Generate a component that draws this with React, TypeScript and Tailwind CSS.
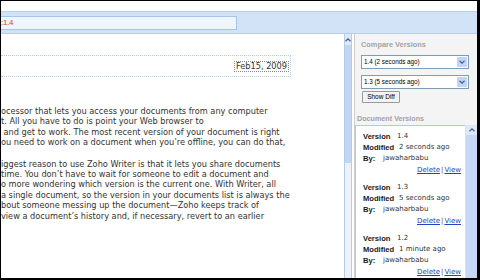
const VERSIONS = [
  { version: "1.4", modified: "2 seconds ago", by: "jawaharbabu" },
  { version: "1.3", modified: "5 seconds ago", by: "jawaharbabu" },
  { version: "1.2", modified: "1 minute ago", by: "jawaharbabu" },
];

const PARA_ONE = [
  "ocessor that lets you access your documents from any computer",
  "t. All you have to do is point your Web browser to",
  " and get to work. The most recent version of your document is right",
  "ou need to work on a document when you\u2019re offline, you can do that,",
];

const PARA_TWO = [
  "iggest reason to use Zoho Writer is that it lets you share documents",
  "time. You don\u2019t have to wait for someone to edit a document and",
  "o more wondering which version is the current one. With Writer, all",
  "a single document, so the version in your documents list is always the",
  "bout someone messing up the document\u2014Zoho keeps track of",
  "view a document\u2019s history and, if necessary, revert to an earlier",
];

const PARA_THREE = [
  "l that allows you to create your own wiki with its own pages and",
];

function Chevron({ up = false }: { up?: boolean }) {
  return (
    <svg width="6" height="4" viewBox="0 0 6 4" className={up ? "rotate-180" : ""}>
      <path d="M0.5 0.8 L3 3.2 L5.5 0.8" fill="none" stroke="#4d6185" strokeWidth="1.2" />
    </svg>
  );
}

function Select({ label }: { label: string }) {
  return (
    <div className="flex h-[14px] w-[108px] items-center border border-[#7f9db9] bg-white">
      <span className="flex-1 whitespace-nowrap pl-[2px] font-['Liberation_Sans',sans-serif] text-[6.3px] leading-none text-black">
        {label}
      </span>
      <span className="m-[1px] flex h-[10px] w-[10px] items-center justify-center rounded-[1px] bg-[#c3d5f7]">
        <Chevron />
      </span>
    </div>
  );
}

function Paragraph({ lines }: { lines: string[] }) {
  return (
    <div className="mb-[11px]">
      {lines.map((line) => (
        <div key={line} className="whitespace-pre leading-[10.4px]">
          {line}
        </div>
      ))}
    </div>
  );
}

export default function App() {
  return (
    <div className="box-border flex h-[280px] w-[480px] flex-col overflow-hidden border-b-2 border-l border-r-[3px] border-t border-black bg-white">
      <div className="h-[10px] shrink-0 bg-white" />

      {/* toolbar band with the version field */}
      <div className="flex h-[23px] shrink-0 items-center border-b border-t border-[#b5cdef] bg-[#d3e3f7]">
        <div className="flex h-[14px] w-[236px] items-center border border-l-0 border-[#a6c3ea] bg-[#eff5fc]">
          <span className="font-['Liberation_Sans',sans-serif] text-[7px] font-bold leading-none text-[#e8791f]">
            :1.4
          </span>
        </div>
      </div>

      <div className="flex min-h-0 flex-1">
        {/* document */}
        <div className="w-[343px] shrink-0 overflow-hidden font-['DejaVu_Sans',sans-serif] text-[8.2px] text-[#333]">
          <div className="mt-[21px] flex h-[22px] w-[290px] items-center justify-end border-b border-r border-t border-dotted border-[#b9c9ea] pr-[1px]">
            <span className="border border-dotted border-[#8a8a8a] px-[1px] leading-[9px] text-[#333]">
              Feb15, 2009
            </span>
          </div>
          <div className="mt-[29px]">
            <Paragraph lines={PARA_ONE} />
            <Paragraph lines={PARA_TWO} />
            <div className="h-[49px]" />
            <Paragraph lines={PARA_THREE} />
          </div>
        </div>

        {/* document scrollbar */}
        <div className="flex w-[8px] shrink-0 flex-col border-x border-[#b8cbe9] bg-[#eef3fb]">
          <div className="flex h-[11px] items-center justify-center bg-[#dde8f8]">
            <Chevron up />
          </div>
          <div className="h-[118px] bg-[#c1d5f4]" />
        </div>

        <div className="w-[2px] shrink-0" />

        {/* side panel */}
        <div className="flex w-[123px] shrink-0 flex-col border-l border-[#cdcdcd] bg-[#f4f4f4]">
          <div className="pl-[6px] pt-[6px]">
            <div className="font-['Liberation_Sans',sans-serif] text-[7.4px] font-bold leading-[10px] text-[#a3a3a3]">
              Compare Versions
            </div>
            <div className="mt-[5px]">
              <Select label="1.4 (2 seconds ago)" />
            </div>
            <div className="mt-[6px]">
              <Select label="1.3 (5 seconds ago)" />
            </div>
            <button className="ml-[1px] mt-[2px] flex h-[12px] w-[38px] items-center justify-center rounded-[1px] border border-[#9a9a9a] bg-[#f3f3f3] font-['Liberation_Sans',sans-serif] text-[6.5px] leading-none text-black">
              Show Diff
            </button>
          </div>

          <div className="mt-[11px] pl-[2px] font-['Liberation_Sans',sans-serif] text-[7.2px] font-bold leading-[10px] text-[#a3a3a3]">
            Document Versions
          </div>

          <div className="mt-[1px] flex min-h-0 flex-1">
            <div className="w-[110px] shrink-0 border-l border-t border-[#b4c8e6] bg-white pl-[7px] pt-[5px]">
              {VERSIONS.map((v) => (
                <div key={v.version} className="pb-[6px] font-['DejaVu_Sans',sans-serif] text-[7px] leading-[11px] text-[#333]">
                  <div className="flex">
                    <span className="w-[34px] font-['Liberation_Sans',sans-serif] text-[7.6px] font-bold text-[#1a1a1a]">
                      Version
                    </span>
                    <span>{v.version}</span>
                  </div>
                  <div className="flex">
                    <span className="w-[36px] font-['Liberation_Sans',sans-serif] text-[7.6px] font-bold text-[#1a1a1a]">
                      Modified
                    </span>
                    <span>{v.modified}</span>
                  </div>
                  <div className="flex">
                    <span className="w-[20px] font-['Liberation_Sans',sans-serif] text-[7.6px] font-bold text-[#1a1a1a]">
                      By:
                    </span>
                    <span>{v.by}</span>
                  </div>
                  <div className="mt-[1px] flex justify-end pr-[4px]">
                    <span className="text-[#2343c4] underline">Delete</span>
                    <span className="px-[1px] text-[#555]">|</span>
                    <span className="text-[#2343c4] underline">View</span>
                  </div>
                </div>
              ))}
            </div>
            <div className="flex w-[12px] shrink-0 flex-col border-l border-[#d6e1f2] bg-[#c6d8f5]">
              <div className="flex h-[10px] items-center justify-center bg-[#dce7f8]">
                <Chevron up />
              </div>
            </div>
          </div>
        </div>
      </div>
    </div>
  );
}
